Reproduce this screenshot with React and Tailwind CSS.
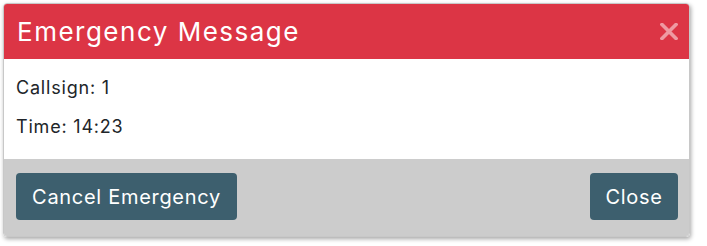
export default function App() {
  const font = { fontFamily: "Inter, 'Noto Sans', sans-serif" };
  return (
    <div className="w-[707px] h-[246px] bg-white pt-[3px] pl-[3px]" style={font}>
      <div className="w-[687px] h-[234px] rounded-[4px] overflow-hidden flex flex-col shadow-[1px_2px_4px_rgba(0,0,0,0.35)] border border-[#c8c8c8]">
        <div className="h-[55px] bg-[#dc3545] flex items-center justify-between pl-[13px] pr-[11px] shrink-0">
          <h5 className="text-white text-[26px] leading-none font-normal tracking-[1.5px]">Emergency Message</h5>
          <button className="w-[18px] h-[18px] flex items-center justify-center">
            <svg width="18" height="17" viewBox="0 0 18 17">
              <path d="M2 1.5 L16 15.5 M16 1.5 L2 15.5" stroke="rgba(255,255,255,0.5)" strokeWidth="3.6" strokeLinecap="square" />
            </svg>
          </button>
        </div>
        <div className="h-[100px] bg-white px-[12px] pt-[17px] text-[#212529] text-[18px] tracking-[0.8px] shrink-0">
          <p className="leading-[24px] mb-[15px]">Callsign: 1</p>
          <p className="leading-[24px]">Time: 14:23</p>
        </div>
        <div className="flex-1 bg-[#cccccc] flex items-start justify-between pl-[12px] pr-[11px] pt-[14px]">
          <button className="h-[47px] w-[221px] bg-[#3d5f6e] text-white text-[20px] tracking-[0.7px] rounded-[4px]">Cancel Emergency</button>
          <button className="h-[47px] w-[88px] bg-[#3d5f6e] text-white text-[20px] tracking-[0.7px] rounded-[4px]">Close</button>
        </div>
      </div>
    </div>
  );
}
